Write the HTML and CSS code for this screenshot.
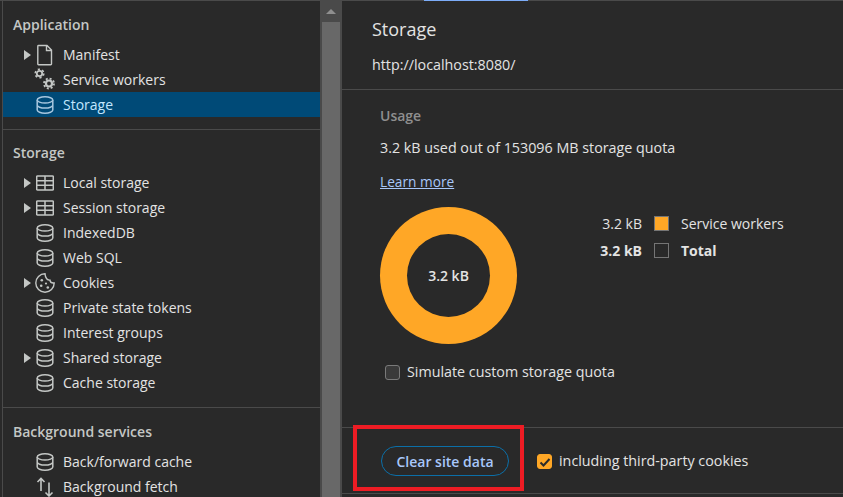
FILE: index.html
```html
<!DOCTYPE html>
<html lang="en">
<head>
  <meta charset="utf-8">
  <title>Application - Storage</title>
  <link rel="stylesheet" href="styles.css">
</head>
<body>
  <svg class="defs" width="0" height="0">
    <symbol id="db" viewBox="0 0 18 18">
      <ellipse cx="9" cy="3.9" rx="7.8" ry="3.1" fill="none" stroke="currentColor" stroke-width="1.5"/>
      <path d="M1.2 3.9v10.200c0 1.700 3.500 3.100 7.800 3.100s7.800-1.400 7.800-3.100V3.900M1.200 9c0 1.700 3.500 3.100 7.800 3.100s7.800-1.400 7.800-3.100" fill="none" stroke="currentColor" stroke-width="1.5"/>
    </symbol>
    <symbol id="grid" viewBox="0 0 18 18">
      <path d="M1.500 2h15c.5 0 .8.300.8.800v12.400c0 .5-.3.800-.8.800h-15c-.5 0-.8-.3-.8-.8V2.800c0-.5.300-.8.800-.8zM.7 6.700h16.600M.7 11.300h16.600M9 2v14" fill="none" stroke="currentColor" stroke-width="1.5"/>
    </symbol>
  </svg>

  <div class="app">
    <nav class="sidebar">
      <section class="group group-first">
        <h2>Application</h2>
        <div class="row"><span class="arrow"></span>
          <svg class="icon icon-big" viewBox="0 0 20 20"><path d="M3.500 .5h8.500l4.500 4.500v14c0 .4-.3.700-.7.700H3.500c-.4 0-.7-.3-.7-.7V1.200c0-.4.300-.7.700-.7zM11.500 .5v5h5" fill="none" stroke="currentColor" stroke-width="1.4"/></svg>
          Manifest</div>
        <div class="row"><span class="arrow-none"></span>
          <svg class="icon icon-big" viewBox="0 0 20 20"><g fill="none" stroke="currentColor"><circle cx="4.500" cy="3.500" r="2.700" stroke-width="1.800"/><circle cx="4.500" cy="3.500" r="4.300" stroke-width="1.600" stroke-dasharray="2.200 2.300"/><circle cx="14" cy="13.500" r="3" stroke-width="2.200"/><circle cx="14" cy="13.500" r="5" stroke-width="1.800" stroke-dasharray="2 1.930"/></g></svg>
          Service workers</div>
        <div class="row row-selected"><span class="arrow-none"></span>
          <svg class="icon"><use href="#db"/></svg>
          Storage</div>
      </section>

      <section class="group">
        <h2>Storage</h2>
        <div class="row"><span class="arrow"></span><svg class="icon"><use href="#grid"/></svg>Local storage</div>
        <div class="row"><span class="arrow"></span><svg class="icon"><use href="#grid"/></svg>Session storage</div>
        <div class="row"><span class="arrow-none"></span><svg class="icon"><use href="#db"/></svg>IndexedDB</div>
        <div class="row"><span class="arrow-none"></span><svg class="icon"><use href="#db"/></svg>Web SQL</div>
        <div class="row"><span class="arrow"></span>
          <svg class="icon icon-big" viewBox="0 0 20 20"><path d="M10 .8a9.200 9.200 0 1 0 9.200 9.200c-2.400.3-4-.9-4.300-2.900C12.500 7.300 10.300 5.300 10 .8z" fill="none" stroke="currentColor" stroke-width="1.400"/><g fill="currentColor"><circle cx="6.800" cy="7.200" r="1.300"/><circle cx="6.200" cy="12.800" r="1.300"/><circle cx="11" cy="10.500" r="1.100"/><circle cx="12.800" cy="14.500" r="1.300"/></g></svg>
          Cookies</div>
        <div class="row"><span class="arrow-none"></span><svg class="icon"><use href="#db"/></svg>Private state tokens</div>
        <div class="row"><span class="arrow-none"></span><svg class="icon"><use href="#db"/></svg>Interest groups</div>
        <div class="row"><span class="arrow"></span><svg class="icon"><use href="#db"/></svg>Shared storage</div>
        <div class="row"><span class="arrow-none"></span><svg class="icon"><use href="#db"/></svg>Cache storage</div>
      </section>

      <section class="group group-last">
        <h2>Background services</h2>
        <div class="row"><span class="arrow-none"></span><svg class="icon"><use href="#db"/></svg>Back/forward cache</div>
        <div class="row"><span class="arrow-none"></span>
          <svg class="icon icon-big" viewBox="0 0 20 20"><path d="M6 14V1.500M2.500 5L6 1.500 9.500 5M14 5.500V19M10.500 15.500L14 19l3.500-3.500" fill="none" stroke="currentColor" stroke-width="1.600"/></svg>
          Background fetch</div>
      </section>
    </nav>

    <div class="scrollbar"><span class="scroll-up"></span><div class="scroll-thumb"></div></div>

    <main class="content">
      <div class="tab-mark"></div>
      <header class="head">
        <h1>Storage</h1>
        <p>http://localhost:8080/</p>
      </header>

      <section class="usage">
        <h3>Usage</h3>
        <p class="quota">3.2 kB used out of 153096 MB storage quota</p>
        <a class="link" href="#">Learn more</a>
        <div class="chart-row">
          <div class="donut"><div class="donut-hole">3.2 kB</div></div>
          <div class="legend">
            <span class="size">3.2 kB</span><span class="swatch swatch-orange"></span><span>Service workers</span>
            <span class="size total">3.2 kB</span><span class="swatch"></span><span class="total">Total</span>
          </div>
        </div>
        <label class="simulate"><span class="check"></span>Simulate custom storage quota</label>
      </section>

      <section class="clear">
        <button class="btn">Clear site data</button>
        <label class="cookies">
          <span class="check check-on"><svg viewBox="0 0 16 16" width="16" height="16"><path d="M3.500 8.500l3 3 6-6.500" fill="none" stroke="#2a2a2a" stroke-width="2"/></svg></span>
          including third-party cookies</label>
        <div class="callout"></div>
      </section>
    </main>
  </div>
</body>
</html>
```

FILE: styles.css
```css
* {
  box-sizing: border-box;
}
html, body {
  margin: 0;
  height: 100%;
  overflow: hidden;
}
body {
  background: #292929;
  color: #e3e3e3;
  font-family: "Open Sans", "Noto Sans", Arial, sans-serif;
  font-size: 14px;
}
.defs {
  display: block;
  height: 0;
}
.app {
  display: flex;
  height: 497px;
  border-top: 1px solid #4a4a4a;
}

/* sidebar */
.sidebar {
  width: 318px;
  margin-left: 2px;
  border-left: 1px solid #4a4a4a;
  overflow: hidden;
  flex: none;
}
.group {
  border-bottom: 1px solid #4a4a4a;
  padding: 11px 0 12px;
}
.group-first {
  padding-top: 12px;
  padding-bottom: 12px;
}
.group-last {
  border-bottom: none;
  padding-top: 12px;
}
.group h2 {
  margin: 0;
  padding-left: 10px;
  font-size: 14px;
  font-weight: 600;
  color: #c4c7c5;
  line-height: 24px;
  height: 29px;
}
.row {
  display: flex;
  align-items: center;
  height: 25px;
  padding-left: 21px;
  white-space: nowrap;
  color: #e3e3e3;
}
.row-selected {
  background: #004a77;
  color: #c2e7ff;
}
.arrow-none {
  width: 12px;
  flex: none;
}
.arrow {
  width: 0;
  height: 0;
  flex: none;
  border-left: 7px solid #c4c7c5;
  border-top: 5px solid transparent;
  border-bottom: 5px solid transparent;
  margin-right: 5px;
}
.icon {
  width: 18px;
  height: 18px;
  margin-right: 9px;
  flex: none;
  color: #c4c7c5;
  overflow: visible;
}
.icon-big {
  width: 20px;
  height: 20px;
  margin-left: -1px;
  margin-right: 8px;
}
.row-selected .icon {
  color: #a8c7df;
}

/* scrollbar */
.scrollbar {
  width: 22px;
  flex: none;
  background: #4a4a4a;
}
.scroll-up {
  display: block;
  width: 0;
  margin: 8px 0 0 6px;
  border-left: 5px solid transparent;
  border-right: 5px solid transparent;
  border-bottom: 5px solid #8f8f8f;
}
.scroll-thumb {
  margin: 8px 2px 0;
  height: 480px;
  background: #686868;
}

/* main panel */
.content {
  flex: 1;
  position: relative;
  min-width: 0;
}
.tab-mark {
  position: absolute;
  top: -1px;
  left: 82px;
  width: 104px;
  height: 1px;
  background: #7cacf8;
}
.head {
  height: 89px;
  padding: 15px 0 0 30px;
  border-bottom: 1px solid #4a4a4a;
}
.head h1 {
  margin: 0;
  font-size: 18px;
  font-weight: 400;
  line-height: 26px;
}
.head p {
  margin: 13px 0 0;
  font-size: 14.3px;
  line-height: 20px;
}
.usage {
  height: 338px;
  padding: 16px 0 0 38px;
  border-bottom: 1px solid #4a4a4a;
}
.usage h3 {
  margin: 0;
  font-size: 14px;
  font-weight: 600;
  color: #8f8f8f;
  line-height: 20px;
}
.quota {
  margin: 12px 0 0;
  font-size: 14.3px;
  line-height: 20px;
}
.link {
  display: block;
  margin-top: 14px;
  width: max-content;
  color: #a8c7fa;
  font-size: 13.7px;
  line-height: 20px;
}
.chart-row {
  display: flex;
  margin-top: 15px;
}
.donut {
  width: 137px;
  height: 137px;
  border-radius: 50%;
  background: #ffa726;
  display: flex;
  align-items: center;
  justify-content: center;
}
.donut-hole {
  width: 83px;
  height: 83px;
  border-radius: 50%;
  background: #292929;
  display: flex;
  align-items: center;
  justify-content: center;
  font-weight: 600;
}
.legend {
  display: grid;
  grid-template-columns: 62px 15px auto;
  grid-auto-rows: 27px;
  align-items: center;
  column-gap: 12px;
  margin: 3px 0 0 63px;
  height: 54px;
}
.size {
  text-align: right;
  white-space: nowrap;
}
.total {
  font-weight: 700;
}
.swatch {
  width: 15px;
  height: 15px;
  border: 1px solid #757575;
}
.swatch-orange {
  background: #ffa726;
}
.simulate, .cookies {
  display: flex;
  align-items: center;
  gap: 7px;
  font-size: 14.3px;
  line-height: 20px;
}
.simulate {
  margin: 18px 0 0 5px;
}
.check {
  width: 15px;
  height: 15px;
  border: 1px solid #7a7a7a;
  border-radius: 3px;
  background: #3a3a3a;
  flex: none;
}
.check-on {
  background: #ffa726;
  border-color: #ffa726;
}
.check-on svg {
  display: block;
  margin: -1px;
}
.clear {
  position: relative;
  display: flex;
  align-items: center;
  height: 66px;
  padding: 1px 0 0 39px;
  border-bottom: 1px solid #4a4a4a;
}
.btn {
  width: 128px;
  height: 30px;
  border: 1px solid #0b6fa8;
  border-radius: 15px;
  background: transparent;
  color: #a8c7fa;
  font: 600 14px "Open Sans", "Noto Sans", Arial, sans-serif;
  margin-right: 28px;
}
.callout {
  position: absolute;
  left: 11px;
  top: -3px;
  width: 171px;
  height: 66px;
  border: 4px solid #ed1c24;
}
```
